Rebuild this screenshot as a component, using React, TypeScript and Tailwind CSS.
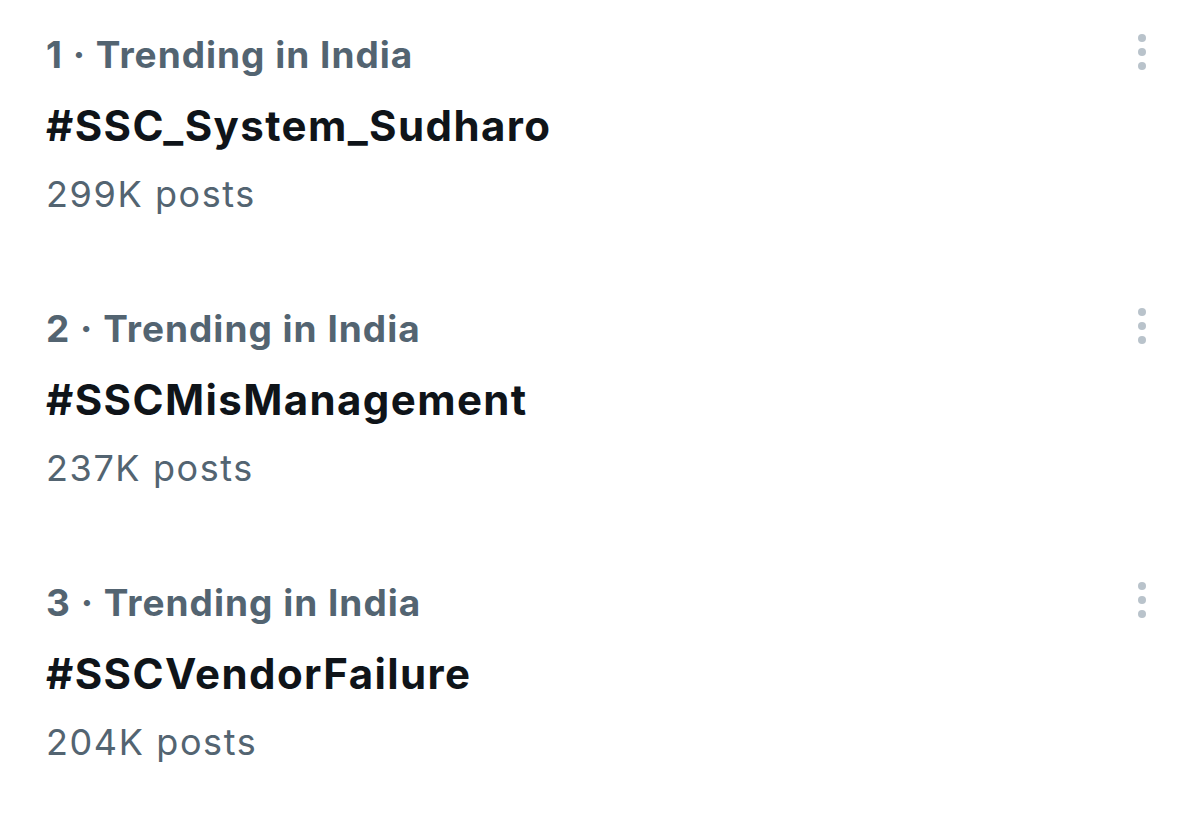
const trends = [
  { rank: 1, tag: "#SSC_System_Sudharo", posts: "299K posts" },
  { rank: 2, tag: "#SSCMisManagement", posts: "237K posts" },
  { rank: 3, tag: "#SSCVendorFailure", posts: "204K posts" },
];

function MoreDots() {
  return (
    <div className="flex flex-col items-center gap-[6px] pt-[3px]">
      <span className="block h-[8px] w-[8px] rounded-full bg-[#b9c3cb]" />
      <span className="block h-[8px] w-[8px] rounded-full bg-[#b9c3cb]" />
      <span className="block h-[8px] w-[8px] rounded-full bg-[#b9c3cb]" />
    </div>
  );
}

export default function App() {
  return (
    <div
      className="min-h-[833px] w-[1200px] bg-white pl-[46px] pr-[54px] pt-[31px]"
      style={{ fontFamily: "Inter, 'Liberation Sans', sans-serif" }}
    >
      <div className="flex flex-col gap-[87px]">
        {trends.map((t) => (
          <div key={t.rank} className="flex items-start justify-between">
            <div className="flex flex-col">
              <div className="text-[37px] font-bold leading-[48px] tracking-[1px] text-[#536471]">
                {t.rank} · Trending in India
              </div>
              <div className="mt-[21px] text-[42px] font-bold leading-[52px] tracking-[1.4px] text-[#0f1419]">
                {t.tag}
              </div>
              <div className="mt-[18px] text-[36px] leading-[48px] tracking-[1.6px] text-[#536471]">
                {t.posts}
              </div>
            </div>
            <MoreDots />
          </div>
        ))}
      </div>
    </div>
  );
}
